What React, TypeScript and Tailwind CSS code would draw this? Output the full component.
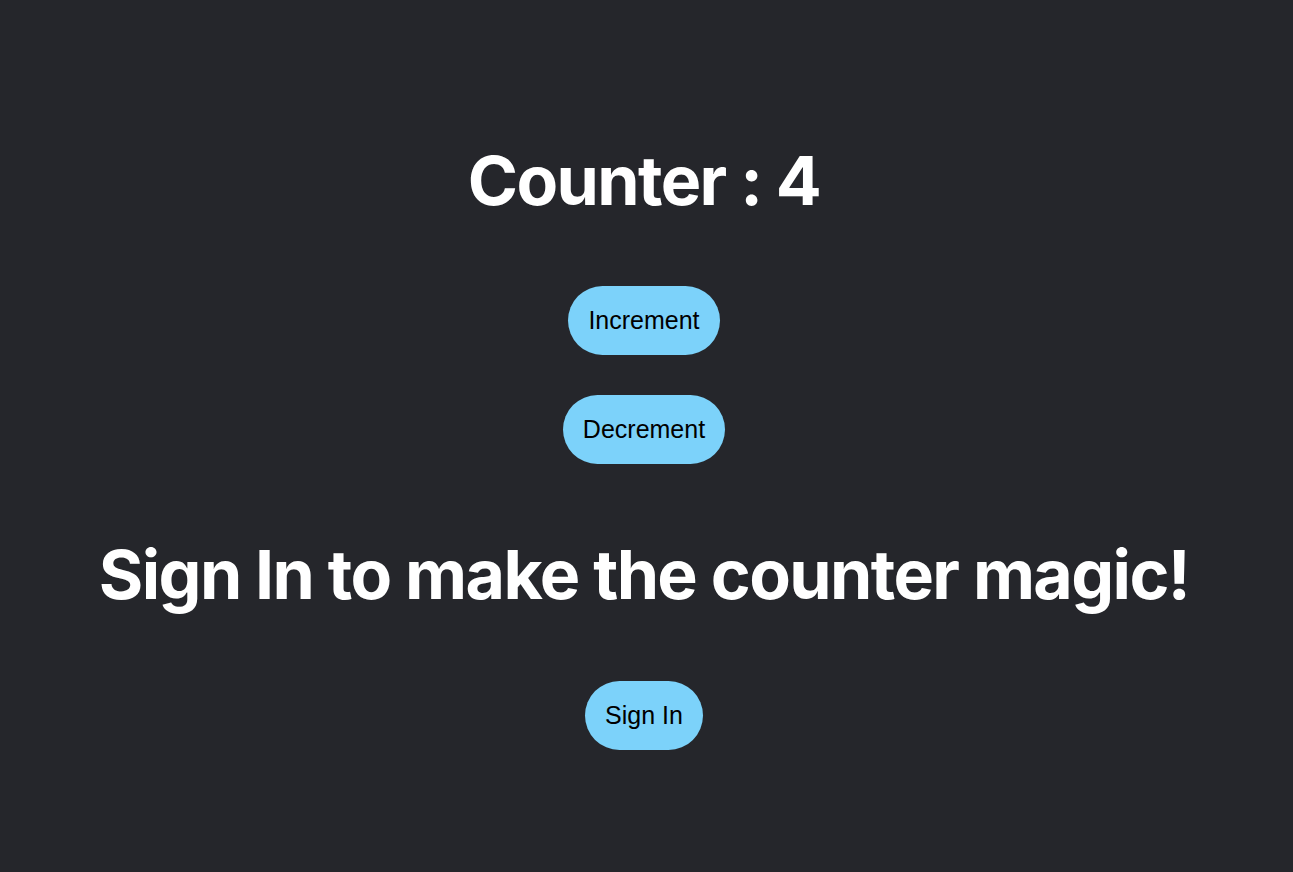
import React from "react";

export default function App() {
  const btn =
    "rounded-full bg-[#7cd2fa] px-5 py-5 text-[25px] leading-[29px] text-black font-['Liberation_Sans',Arial,sans-serif]";
  const h = "text-[68px] leading-[88px] font-bold text-white tracking-[-1.6px] whitespace-nowrap";
  return (
    <div className="min-h-screen w-full bg-[#25262b] flex flex-col items-center pt-[136px] pr-[5px] font-['Inter',sans-serif]">
      <h1 className={h}>Counter : 4</h1>
      <button className={btn + " mt-[62px]"}>Increment</button>
      <button className={btn + " mt-[40px]"}>Decrement</button>
      <h1 className={h + " mt-[66px]"}>Sign In to make the counter magic!</h1>
      <button className={btn + " mt-[63px]"}>Sign In</button>
    </div>
  );
}
